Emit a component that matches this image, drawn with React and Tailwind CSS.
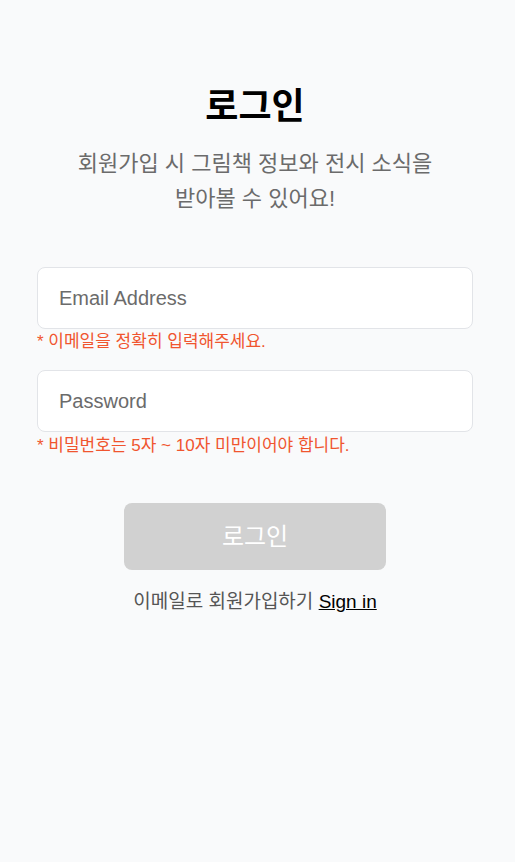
import React, { useState } from 'react';

const FONT = { fontFamily: '"Liberation Sans", "Noto Sans CJK KR", sans-serif' };

export default function App() {
  const [email, setEmail] = useState('');
  const [password, setPassword] = useState('');

  return (
    <div className="min-h-[862px] bg-[#f9fafb]" style={FONT}>
      <div className="w-[436px] ml-[37px] pt-[85px]">
        <h1 className="text-center text-[36px] font-bold leading-[44px] text-black">
          로그인
        </h1>
        <p className="mt-[17px] text-center text-[22px] leading-[35px] text-[#6b6b6b]">
          회원가입 시 그림책 정보와 전시 소식을
          <br />
          받아볼 수 있어요!
        </p>

        <form className="mt-[51px]" onSubmit={(e) => e.preventDefault()}>
          <input
            type="email"
            value={email}
            onChange={(e) => setEmail(e.target.value)}
            placeholder="Email Address"
            className="block h-[62px] w-full rounded-lg border border-[#e2e4e8] bg-white px-[21px] text-[20px] text-gray-800 outline-none placeholder:text-[#6b6b6b]"
          />
          <p className="mt-[2px] text-[17px] leading-[22px] text-[#f0552f]">
            * 이메일을 정확히 입력해주세요.
          </p>

          <input
            type="password"
            value={password}
            onChange={(e) => setPassword(e.target.value)}
            placeholder="Password"
            className="mt-[17px] block h-[62px] w-full rounded-lg border border-[#e2e4e8] bg-white px-[21px] text-[20px] text-gray-800 outline-none placeholder:text-[#6b6b6b]"
          />
          <p className="mt-[3px] text-[17px] leading-[22px] text-[#f0552f]">
            * 비밀번호는 5자 ~ 10자 미만이어야 합니다.
          </p>

          <div className="mt-[46px] flex justify-center">
            <button
              type="submit"
              disabled
              className="h-[67px] w-[262px] rounded-lg bg-[#d1d1d1] text-[24px] text-white"
            >
              로그인
            </button>
          </div>
        </form>

        <p className="mt-[19px] text-center text-[19px] leading-[26px] text-[#555]">
          이메일로 회원가입하기{' '}
          <a href="#" className="text-black underline">
            Sign in
          </a>
        </p>
      </div>
    </div>
  );
}
